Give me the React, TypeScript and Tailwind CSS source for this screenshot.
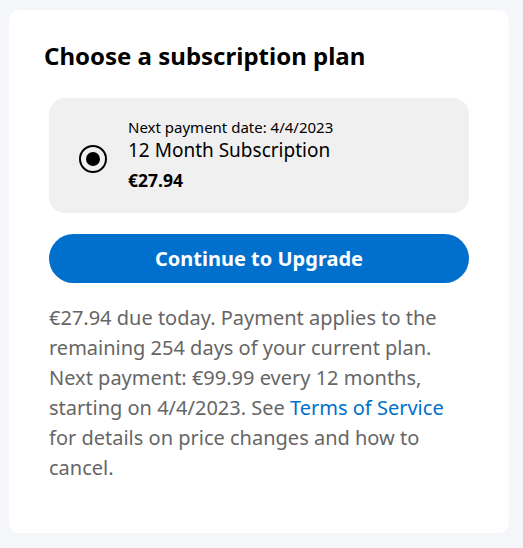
import React from 'react';

const font = { fontFamily: '"Noto Sans", "Open Sans", sans-serif' };

function Radio() {
  return (
    <span className="mt-[6px] flex h-[28px] w-[28px] shrink-0 items-center justify-center rounded-full border-[2.5px] border-black">
      <span className="h-[14px] w-[14px] rounded-full bg-black" />
    </span>
  );
}

export default function App() {
  return (
    <div className="min-h-[548px] bg-[#f5f6fa] pl-[9px] pt-[10px]" style={font}>
      <div className="w-[500px] h-[523px] rounded-[10px] bg-white px-[40px] pt-[29px]">
        <h1 className="-ml-[5px] text-[24px] font-bold leading-[34px] text-black">
          Choose a subscription plan
        </h1>

        <div className="mt-[25px] flex h-[115px] items-center rounded-[16px] bg-[#f0f0f0] pl-[30px]">
          <Radio />
          <div className="ml-[21px] -mt-[3px] flex flex-col">
            <span className="text-[15px] leading-[19px] text-black">Next payment date: 4/4/2023</span>
            <span className="text-[19px] leading-[26px] text-black">12 Month Subscription</span>
            <span className="mt-[6px] text-[17.5px] font-bold leading-[22px] text-black">€27.94</span>
          </div>
        </div>

        <button className="mt-[21px] flex h-[49px] w-full items-center justify-center rounded-full bg-[#0070cc] text-[20px] font-bold text-white">
          Continue to Upgrade
        </button>

        <p className="mt-[20px] text-[20px] leading-[30px] text-[#666666]">
          €27.94 due today. Payment applies to the remaining 254 days of your current plan. Next
          payment: €99.99 every 12 months, starting on 4/4/2023. See{' '}
          <a className="text-[#0070cc]">Terms of Service</a> for details on price changes and how
          to cancel.
        </p>
      </div>
    </div>
  );
}
